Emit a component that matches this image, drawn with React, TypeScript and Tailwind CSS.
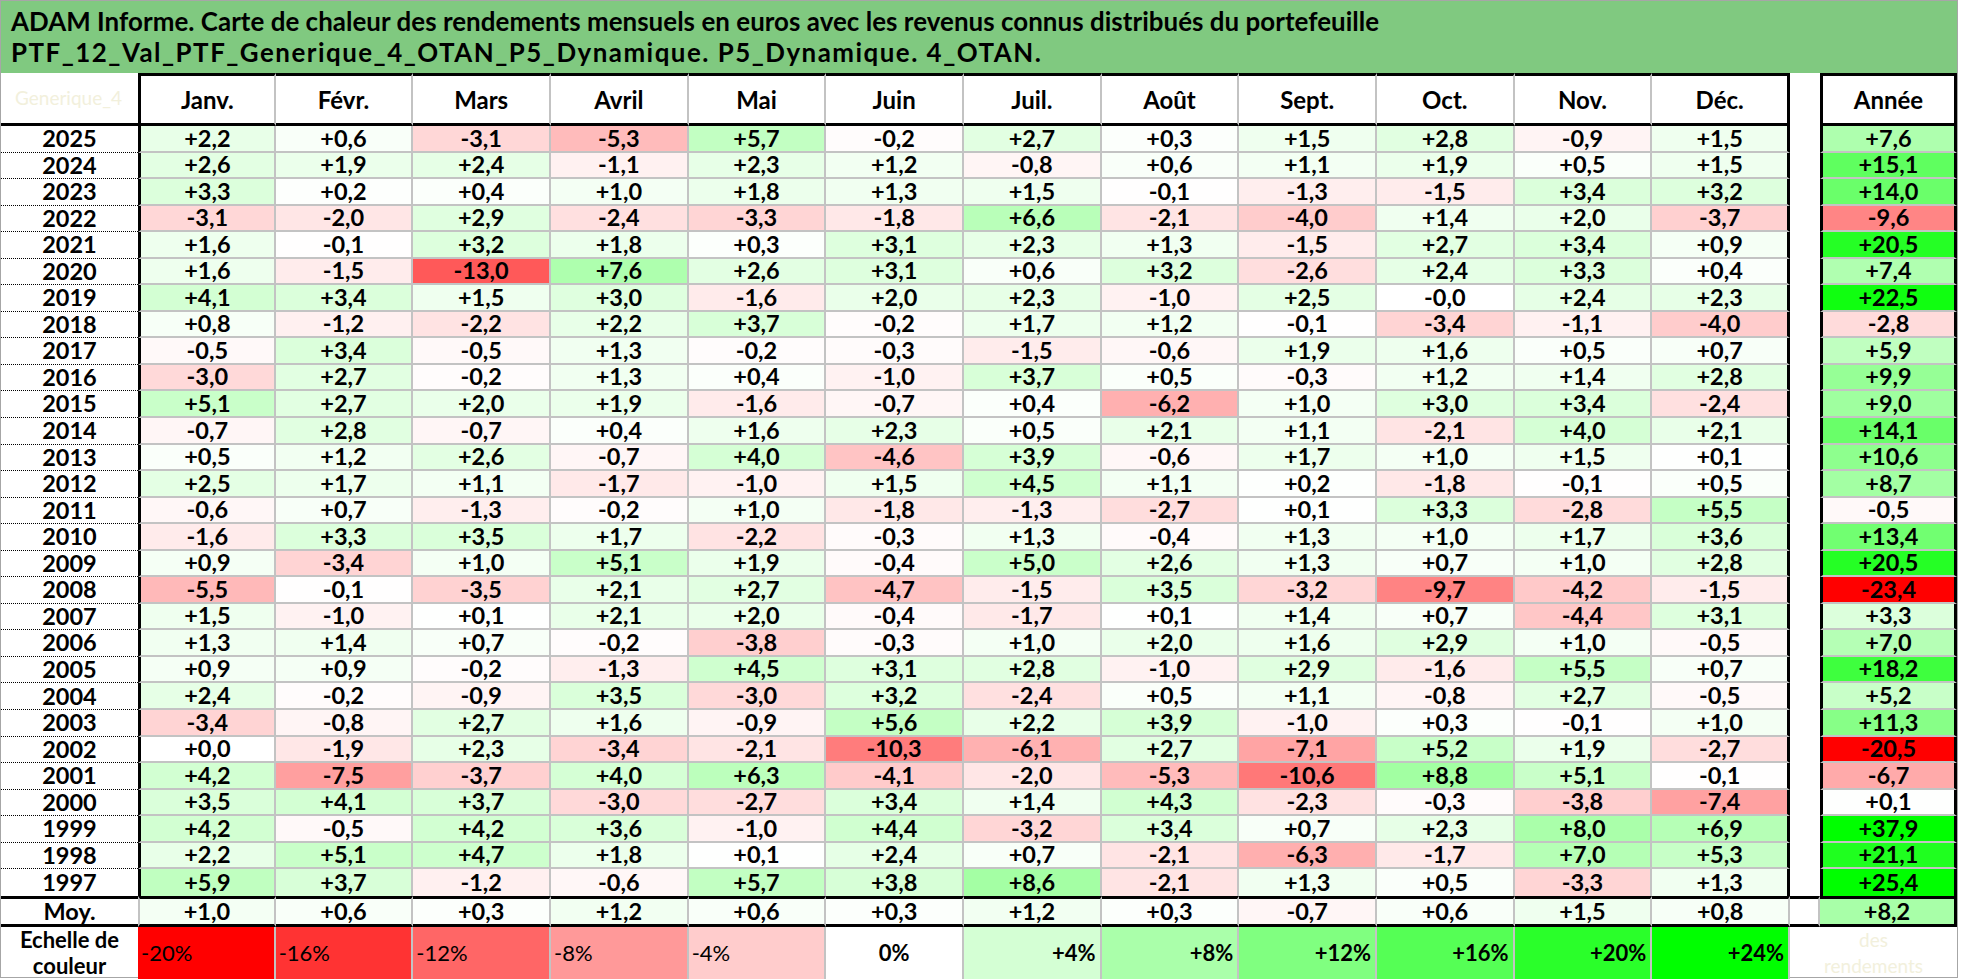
import React from "react";

const months = ["Janv.", "Févr.", "Mars", "Avril", "Mai", "Juin", "Juil.", "Août", "Sept.", "Oct.", "Nov.", "Déc."];

const raw: [string, string][] = [
  ["2025", "+2,2 +0,6 -3,1 -5,3 +5,7 -0,2 +2,7 +0,3 +1,5 +2,8 -0,9 +1,5 +7,6"],
  ["2024", "+2,6 +1,9 +2,4 -1,1 +2,3 +1,2 -0,8 +0,6 +1,1 +1,9 +0,5 +1,5 +15,1"],
  ["2023", "+3,3 +0,2 +0,4 +1,0 +1,8 +1,3 +1,5 -0,1 -1,3 -1,5 +3,4 +3,2 +14,0"],
  ["2022", "-3,1 -2,0 +2,9 -2,4 -3,3 -1,8 +6,6 -2,1 -4,0 +1,4 +2,0 -3,7 -9,6"],
  ["2021", "+1,6 -0,1 +3,2 +1,8 +0,3 +3,1 +2,3 +1,3 -1,5 +2,7 +3,4 +0,9 +20,5"],
  ["2020", "+1,6 -1,5 -13,0 +7,6 +2,6 +3,1 +0,6 +3,2 -2,6 +2,4 +3,3 +0,4 +7,4"],
  ["2019", "+4,1 +3,4 +1,5 +3,0 -1,6 +2,0 +2,3 -1,0 +2,5 -0,0 +2,4 +2,3 +22,5"],
  ["2018", "+0,8 -1,2 -2,2 +2,2 +3,7 -0,2 +1,7 +1,2 -0,1 -3,4 -1,1 -4,0 -2,8"],
  ["2017", "-0,5 +3,4 -0,5 +1,3 -0,2 -0,3 -1,5 -0,6 +1,9 +1,6 +0,5 +0,7 +5,9"],
  ["2016", "-3,0 +2,7 -0,2 +1,3 +0,4 -1,0 +3,7 +0,5 -0,3 +1,2 +1,4 +2,8 +9,9"],
  ["2015", "+5,1 +2,7 +2,0 +1,9 -1,6 -0,7 +0,4 -6,2 +1,0 +3,0 +3,4 -2,4 +9,0"],
  ["2014", "-0,7 +2,8 -0,7 +0,4 +1,6 +2,3 +0,5 +2,1 +1,1 -2,1 +4,0 +2,1 +14,1"],
  ["2013", "+0,5 +1,2 +2,6 -0,7 +4,0 -4,6 +3,9 -0,6 +1,7 +1,0 +1,5 +0,1 +10,6"],
  ["2012", "+2,5 +1,7 +1,1 -1,7 -1,0 +1,5 +4,5 +1,1 +0,2 -1,8 -0,1 +0,5 +8,7"],
  ["2011", "-0,6 +0,7 -1,3 -0,2 +1,0 -1,8 -1,3 -2,7 +0,1 +3,3 -2,8 +5,5 -0,5"],
  ["2010", "-1,6 +3,3 +3,5 +1,7 -2,2 -0,3 +1,3 -0,4 +1,3 +1,0 +1,7 +3,6 +13,4"],
  ["2009", "+0,9 -3,4 +1,0 +5,1 +1,9 -0,4 +5,0 +2,6 +1,3 +0,7 +1,0 +2,8 +20,5"],
  ["2008", "-5,5 -0,1 -3,5 +2,1 +2,7 -4,7 -1,5 +3,5 -3,2 -9,7 -4,2 -1,5 -23,4"],
  ["2007", "+1,5 -1,0 +0,1 +2,1 +2,0 -0,4 -1,7 +0,1 +1,4 +0,7 -4,4 +3,1 +3,3"],
  ["2006", "+1,3 +1,4 +0,7 -0,2 -3,8 -0,3 +1,0 +2,0 +1,6 +2,9 +1,0 -0,5 +7,0"],
  ["2005", "+0,9 +0,9 -0,2 -1,3 +4,5 +3,1 +2,8 -1,0 +2,9 -1,6 +5,5 +0,7 +18,2"],
  ["2004", "+2,4 -0,2 -0,9 +3,5 -3,0 +3,2 -2,4 +0,5 +1,1 -0,8 +2,7 -0,5 +5,2"],
  ["2003", "-3,4 -0,8 +2,7 +1,6 -0,9 +5,6 +2,2 +3,9 -1,0 +0,3 -0,1 +1,0 +11,3"],
  ["2002", "+0,0 -1,9 +2,3 -3,4 -2,1 -10,3 -6,1 +2,7 -7,1 +5,2 +1,9 -2,7 -20,5"],
  ["2001", "+4,2 -7,5 -3,7 +4,0 +6,3 -4,1 -2,0 -5,3 -10,6 +8,8 +5,1 -0,1 -6,7"],
  ["2000", "+3,5 +4,1 +3,7 -3,0 -2,7 +3,4 +1,4 +4,3 -2,3 -0,3 -3,8 -7,4 +0,1"],
  ["1999", "+4,2 -0,5 +4,2 +3,6 -1,0 +4,4 -3,2 +3,4 +0,7 +2,3 +8,0 +6,9 +37,9"],
  ["1998", "+2,2 +5,1 +4,7 +1,8 +0,1 +2,4 +0,7 -2,1 -6,3 -1,7 +7,0 +5,3 +21,1"],
  ["1997", "+5,9 +3,7 -1,2 -0,6 +5,7 +3,8 +8,6 -2,1 +1,3 +0,5 -3,3 +1,3 +25,4"],
];

const moy = "+1,0 +0,6 +0,3 +1,2 +0,6 +0,3 +1,2 +0,3 -0,7 +0,6 +1,5 +0,8 +8,2".split(" ");

const rows = raw.map(([y, s]) => ({ year: y, vals: s.split(" ") }));

function colorFor(txt: string): string {
  const v = parseFloat(txt.replace(",", "."));
  if (v < 0) {
    const t = Math.min(1, -v / 20);
    const g = Math.round(255 * (1 - t));
    return `rgb(255,${g},${g})`;
  }
  const t = Math.min(1, v / 24);
  const r = Math.round(255 * (1 - t));
  return `rgb(${r},255,${r})`;
}

const scale = [
  { l: "-20%", c: "#ff0000", a: "neg" },
  { l: "-16%", c: "#ff3333", a: "neg" },
  { l: "-12%", c: "#ff6666", a: "neg" },
  { l: "-8%", c: "#ff9999", a: "neg" },
  { l: "-4%", c: "#ffcccc", a: "neg" },
  { l: "0%", c: "#ffffff", a: "mid" },
  { l: "+4%", c: "#d4ffd4", a: "pos" },
  { l: "+8%", c: "#aaffaa", a: "pos" },
  { l: "+12%", c: "#80ff80", a: "pos" },
  { l: "+16%", c: "#55ff55", a: "pos" },
  { l: "+20%", c: "#2aff2a", a: "pos" },
  { l: "+24%", c: "#00ff00", a: "pos" },
];

const grid = "grid grid-cols-[137px_repeat(12,minmax(0,1fr))_30px_137px]";

export default function App() {
  return (
    <div className="w-[1961px] h-[979px] bg-white font-['Lato','Liberation_Sans',sans-serif] text-black">
      <div className="w-[1958px] border border-[#a6a6a6] bg-white">
        {/* Title */}
        <div className="h-[72px] bg-[#80c980] pl-[10px] pt-[5px] text-[25.9px] font-bold leading-[31px] text-black">
          <div className="whitespace-nowrap tracking-[0.05px]">
            ADAM Informe. Carte de chaleur des rendements mensuels en euros avec les revenus connus distribués du portefeuille
          </div>
          <div className="whitespace-nowrap tracking-[1.5px]">PTF_12_Val_PTF_Generique_4_OTAN_P5_Dynamique. P5_Dynamique. 4_OTAN.</div>
        </div>

        {/* Header */}
        <div className={`${grid} h-[53px] text-[24px] font-bold`}>
          <div className="flex items-center whitespace-nowrap border-b-[3px] border-b-black pl-[14px] text-[19px] font-normal text-[#f2f0dc]">
            Generique_4
          </div>
          {months.map((m, i) => (
            <div
              key={m}
              className={`flex items-center justify-center border-t-[3px] border-b-[3px] border-t-black border-b-black ${
                i === 0 ? "border-l-[3px] border-l-black" : ""
              } ${i === 11 ? "border-r-[3px] border-r-black" : "border-r-2 border-r-[#c3c3c3]"}`}
            >
              {m}
            </div>
          ))}
          <div />
          <div className="flex items-center justify-center border-[3px] border-black">Année</div>
        </div>

        {/* Data rows */}
        {rows.map((r, ri) => {
          const last = ri === rows.length - 1;
          return (
            <div key={r.year} className={`${grid} h-[26.55px] text-[23.5px] font-bold leading-none`}>
              <div
                className={`flex items-center justify-center ${
                  last ? "" : "border-b border-dotted border-b-black"
                }`}
              >
                {r.year}
              </div>
              {r.vals.slice(0, 12).map((v, i) => (
                <div
                  key={i}
                  style={{ backgroundColor: colorFor(v) }}
                  className={`flex items-center justify-center ${last ? "" : "border-b-2 border-b-[#c3c3c3]"} ${
                    i === 0 ? "border-l-[3px] border-l-black" : ""
                  } ${i === 11 ? "border-r-[3px] border-r-black" : "border-r-2 border-r-[#c3c3c3]"}`}
                >
                  {v}
                </div>
              ))}
              <div />
              <div
                style={{ backgroundColor: colorFor(r.vals[12]) }}
                className={`flex items-center justify-center border-x-[3px] border-x-black ${
                  last ? "" : "border-b-2 border-b-[#c3c3c3]"
                }`}
              >
                {r.vals[12]}
              </div>
            </div>
          );
        })}

        {/* Moyenne row */}
        <div className={`${grid} h-[31px] text-[23.5px] font-bold leading-none`}>
          <div className="flex items-center justify-center border-y-[3px] border-y-black">Moy.</div>
          {moy.slice(0, 12).map((v, i) => (
            <div
              key={i}
              style={{ backgroundColor: colorFor(v) }}
              className={`flex items-center justify-center border-y-[3px] border-y-black border-r-2 border-r-[#c3c3c3] ${
                i === 0 ? "border-l-2 border-l-[#c3c3c3]" : ""
              }`}
            >
              {v}
            </div>
          ))}
          <div className="border-y-[3px] border-y-black border-r-2 border-r-[#c3c3c3]" />
          <div
            style={{ backgroundColor: colorFor(moy[12]) }}
            className="flex items-center justify-center border-y-[3px] border-y-black border-r-[3px] border-r-black"
          >
            {moy[12]}
          </div>
        </div>

        {/* Color scale row */}
        <div className={`${grid} h-[50px] text-[22px]`}>
          <div className="flex flex-col items-center justify-center font-bold leading-[26px]">
            <span>Echelle de</span>
            <span>couleur</span>
          </div>
          {scale.map((s) => (
            <div
              key={s.l}
              style={{ backgroundColor: s.c }}
              className={`flex items-center border-r-2 border-r-[#c3c3c3] ${
                s.a === "neg"
                  ? "justify-start pl-[3px] font-normal"
                  : s.a === "mid"
                  ? "justify-center font-bold"
                  : "justify-end pr-[4px] font-bold"
              }`}
            >
              {s.l}
            </div>
          ))}
          <div className="col-span-2 flex flex-col items-center justify-center text-[19px] leading-[26px] text-[#f2f0dc]">
            <span>des</span>
            <span>rendements</span>
          </div>
        </div>
      </div>
    </div>
  );
}
